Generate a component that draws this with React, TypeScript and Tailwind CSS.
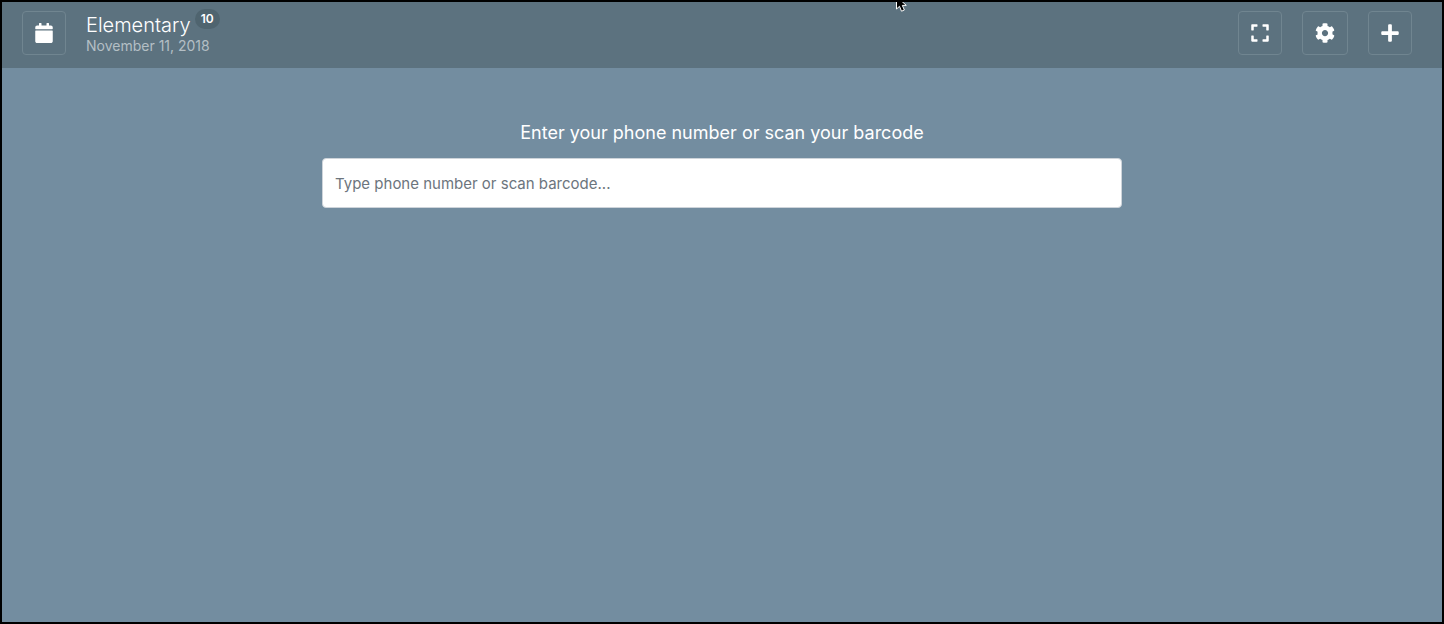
import React from 'react';
import { FaCalendar, FaCog, FaExpand, FaPlus } from 'react-icons/fa';

interface IconButtonProps {
  label: string;
  children: React.ReactNode;
}

function IconButton({ label, children }: IconButtonProps) {
  return (
    <button
      type="button"
      aria-label={label}
      className="flex h-11 items-center justify-center rounded border border-[#708590] px-3 text-xl text-white"
    >
      {children}
    </button>
  );
}

function Cursor() {
  return (
    <svg className="absolute -top-1.5 left-[62%] h-4 w-3" viewBox="0 0 12 16" aria-hidden="true">
      <path
        d="M1.5 0.5V13L4.5 10.3L6.5 15.2L9.4 14L7.3 9.4H11.3Z"
        fill="#000"
        stroke="#fff"
        strokeWidth="1"
      />
    </svg>
  );
}

export default function App() {
  return (
    <div className="relative min-h-screen overflow-hidden border-2 border-black bg-[#738da0] font-['Inter',sans-serif]">
      <header className="flex items-start justify-between bg-[#5c727f] pt-[9px] pr-[30px] pb-[13px] pl-5">
        <div className="flex gap-5">
          <IconButton label="Select event">
            <FaCalendar className="w-[18px]" />
          </IconButton>
          <div>
            <div className="flex items-start gap-1">
              <h1 className="text-xl leading-7 font-light text-white">Elementary</h1>
              <span className="-mt-0.5 rounded-full bg-[#4f646f] px-1.5 text-xs leading-5 font-semibold text-white">
                10
              </span>
            </div>
            <p className="text-sm leading-[14px] text-[#b4bfc5]">November 11, 2018</p>
          </div>
        </div>
        <div className="flex gap-5">
          <IconButton label="Full screen">
            <FaExpand className="w-[18px]" />
          </IconButton>
          <IconButton label="Settings">
            <FaCog />
          </IconButton>
          <IconButton label="Add">
            <FaPlus className="w-[18px]" />
          </IconButton>
        </div>
      </header>
      <main className="mx-auto mt-[50px] max-w-[800px]">
        <label htmlFor="lookup" className="block text-center text-lg leading-[30px] text-white">
          Enter your phone number or scan your barcode
        </label>
        <input
          id="lookup"
          type="text"
          placeholder="Type phone number or scan barcode..."
          className="mt-2.5 block h-[50px] w-full rounded border border-[#ced4da] bg-white px-3 text-[15px] text-[#495057] placeholder:text-[#6c757d]"
        />
      </main>
      <Cursor />
    </div>
  );
}
